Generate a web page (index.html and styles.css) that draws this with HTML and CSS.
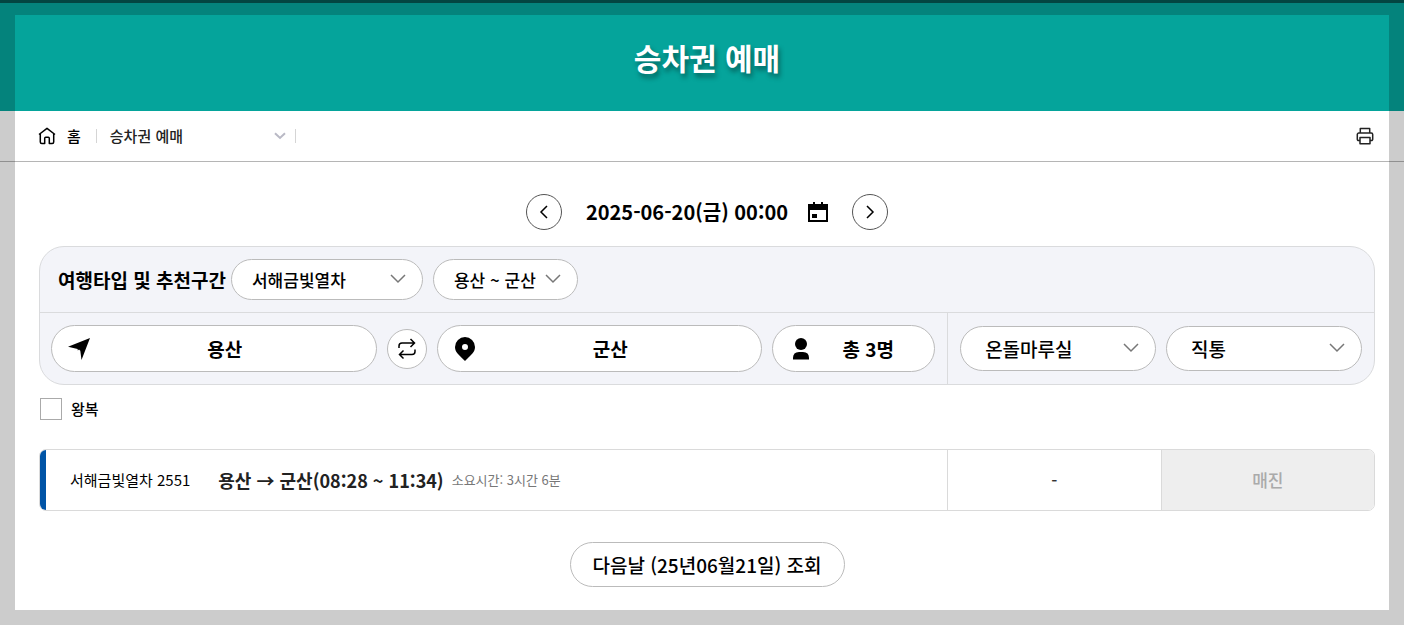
FILE: index.html
```html
<!DOCTYPE html>
<html lang="ko">
<head>
<meta charset="utf-8">
<meta name="viewport" content="width=device-width, initial-scale=1">
<title>승차권 예매</title>
<link rel="stylesheet" href="styles.css">
</head>
<body>
<header class="banner"><h1 class="banner-title">승차권 예매</h1></header>

<nav class="crumbs" aria-label="현재 위치">
  <a class="home" href="#">
    <svg width="18" height="18" viewBox="0 0 18 18" fill="none" stroke="currentColor" stroke-width="1.5" stroke-linejoin="round" aria-hidden="true"><path d="M1 7.500 9 1.300l8 6.200M2.300 6.800v8.200a1.500 1.500 0 0 0 1.500 1.500h2.900v-5.300q0-1 1-1h2.600q1 0 1 1v5.300h2.900a1.500 1.500 0 0 0 1.500-1.500V6.800"/></svg>
    홈
  </a>
  <button class="crumb-menu" type="button">
    승차권 예매
    <svg width="12" height="8" viewBox="0 0 12 8" fill="none" stroke="#b9b9c5" stroke-width="2" aria-hidden="true"><path d="m1 1.300 5 4.700 5-4.700"/></svg>
  </button>
  <button class="print" type="button" aria-label="인쇄">
    <svg width="18" height="18" viewBox="0 0 18 18" fill="none" stroke="#222" stroke-width="1.500" stroke-linejoin="round" aria-hidden="true"><path d="M4.300 6V1.500h9.400V6M4 13.500H2.500a1.200 1.200 0 0 1-1.200-1.200V7.500A1.500 1.500 0 0 1 2.800 6h12.400a1.500 1.500 0 0 1 1.500 1.500v4.800a1.200 1.200 0 0 1-1.200 1.200H14M4 10.500h10v6.200H4z"/></svg>
  </button>
</nav>

<main class="content">
  <div class="date-bar">
    <button class="round" type="button" aria-label="이전 날짜"><svg width="10" height="16" viewBox="0 0 10 16" fill="none" stroke="#000" stroke-width="1.500" aria-hidden="true"><path d="M8 2 2 8l6 6"/></svg></button>
    <button class="date" type="button">2025-06-20(금) 00:00
      <svg width="20" height="20" viewBox="0 0 20 20" aria-hidden="true"><path fill-rule="evenodd" d="M0 2h5V0h2v2h6V0h2v2h5v18H0zm2 6v10h16V8z"/><path d="M4 12h5v4H4z"/></svg>
    </button>
    <button class="round" type="button" aria-label="다음 날짜"><svg width="10" height="16" viewBox="0 0 10 16" fill="none" stroke="#000" stroke-width="1.500" aria-hidden="true"><path d="m2 2 6 6-6 6"/></svg></button>
  </div>

  <form class="search">
    <div class="type-row">
      <label class="type-label" for="train">여행타입 및 추천구간</label>
      <div class="picks">
        <div class="pick pick-train"><select id="train"><option>서해금빛열차</option></select><svg width="16" height="10" viewBox="0 0 16 10" aria-hidden="true"><path d="m1 1 7 7 7-7"/></svg></div>
        <div class="pick pick-section"><select aria-label="추천구간"><option>용산 ~ 군산</option></select><svg width="16" height="10" viewBox="0 0 16 10" aria-hidden="true"><path d="m1 1 7 7 7-7"/></svg></div>
      </div>
    </div>
    <div class="trip-row">
      <div class="trip">
        <button class="pill station" type="button">
          <svg width="22" height="22" viewBox="0 0 22 22" aria-hidden="true"><path d="M22 0 13.500 22 12.300 12.800 11 11.500 9.800 12.500 9.600 11 0 8.800z"/></svg>
          <span>용산</span>
        </button>
        <button class="swap" type="button" aria-label="출발 도착 바꾸기"><svg width="20" height="22" viewBox="0 0 20 22" fill="none" stroke="#000" stroke-width="1.500" aria-hidden="true"><path d="M2 10V8q0-3 3-3h12.500M13.500 1l4 4-4 4M18 11.500v2q0 3-3 3H2.500M6.500 12.500l-4 4 4 4"/></svg></button>
        <button class="pill station" type="button">
          <svg width="22" height="24" viewBox="0 0 22 24" aria-hidden="true"><path fill-rule="evenodd" d="M11 0a10 10 0 0 1 10 10c0 5-3.500 7.500-10 14C4.500 17.500 1 15 1 10A10 10 0 0 1 11 0m0 7a3 3 0 1 0 0 6 3 3 0 0 0 0-6"/></svg>
          <span>군산</span>
        </button>
        <button class="pill people" type="button">
          <svg width="22" height="22" viewBox="0 0 22 22" aria-hidden="true"><circle cx="11" cy="6" r="6"/><path d="M3 21.500V20q0-6 6-6h4q6 0 6 6v1.500z"/></svg>
          <span>총 3명</span>
        </button>
      </div>
      <div class="options">
        <div class="pick"><select aria-label="객실"><option>온돌마루실</option></select><svg width="16" height="10" viewBox="0 0 16 10" aria-hidden="true"><path d="m1 1 7 7 7-7"/></svg></div>
        <div class="pick"><select aria-label="여정"><option>직통</option></select><svg width="16" height="10" viewBox="0 0 16 10" aria-hidden="true"><path d="m1 1 7 7 7-7"/></svg></div>
      </div>
    </div>
  </form>

  <label class="round-trip"><input type="checkbox">왕복</label>

  <article class="result">
    <div class="train-info">
      <span class="train-name">서해금빛열차 2551</span>
      <h2 class="route">용산 → 군산(08:28 ~ 11:34)</h2>
      <span class="duration">소요시간: 3시간 6분</span>
    </div>
    <div class="fare">-</div>
    <button class="sold-out" type="button" disabled>매진</button>
  </article>

  <button class="next-day" type="button">다음날 (25년06월21일) 조회</button>
</main>
<div class="frame" aria-hidden="true"></div>
</body>
</html>
```

FILE: styles.css
```css
* { box-sizing: border-box; }

body {
  margin: 0;
  min-height: 100vh;
  background: #fff;
  color: #000;
  font-family: "Noto Sans CJK KR", "Noto Sans", sans-serif;
  font-size: 15px;
  line-height: 24px;
}

button, select, input { font: inherit; color: inherit; margin: 0; }
button { padding: 0; border: 0; background: none; cursor: pointer; }
svg { display: block; flex: none; }

.frame {
  position: fixed;
  inset: 0;
  border: 15px solid rgba(0, 0, 0, 0.2);
  pointer-events: none;
}

.banner {
  height: 111px;
  padding: 0 29px 0 39px;
  display: flex;
  align-items: center;
  justify-content: center;
  border-top: 3px solid #045752;
  background: #05a49b;
}
.banner-title {
  margin: 0;
  color: #fff;
  font-size: 30px;
  font-weight: 700;
  line-height: 48px;
  text-shadow: 2px 4px 5px rgba(0, 0, 0, 0.4);
}

.crumbs {
  height: 51px;
  padding: 0 30px 0 38px;
  display: flex;
  align-items: center;
  border-bottom: 1px solid #b5b5b5;
  font-weight: 500;
}
.home {
  display: flex;
  align-items: center;
  gap: 11px;
  color: #000;
  text-decoration: none;
}
.crumb-menu {
  width: 200px;
  height: 14px;
  margin-left: 15px;
  padding: 0 9px 0 13px;
  display: flex;
  align-items: center;
  justify-content: space-between;
  border: solid #d5d5d5;
  border-width: 0 1px;
  color: #222;
}
.print { margin-left: auto; }

.content { padding: 32px 29px 38px 39px; }

.date-bar {
  display: flex;
  align-items: center;
  justify-content: center;
  gap: 24px;
}
.round {
  width: 36px;
  height: 36px;
  display: grid;
  place-items: center;
  border: 1px solid #555;
  border-radius: 50%;
}
.date {
  display: flex;
  align-items: center;
  gap: 20px;
  font-size: 20px;
  font-weight: 700;
}

.search {
  margin-top: 16px;
  border: 1px solid #dadbdd;
  border-radius: 25px;
  background: #f3f4f9;
}
.type-row {
  display: flex;
  align-items: center;
  gap: 5px;
  padding: 12px 18px;
  border-bottom: 1px solid #dadbdd;
}
.type-label { font-size: 19px; font-weight: 700; }
.picks { display: flex; gap: 10px; }

.pick { display: grid; align-items: center; }
.pick > * { grid-area: 1 / 1; }
.pick select {
  width: 100%;
  height: 45px;
  padding: 0 40px 0 24px;
  appearance: none;
  border: 1px solid #bbb;
  border-radius: 24px;
  background: #fff;
  font-size: 19px;
  font-weight: 500;
}
.pick svg {
  justify-self: end;
  margin: 0 17px 2px 0;
  fill: none;
  stroke: #777;
  stroke-width: 1.5;
  pointer-events: none;
}
.type-row .pick select {
  height: 41px;
  padding-left: 20px;
  font-size: 17px;
}
.pick-train { width: 192px; }
.pick-section { width: 145px; }

.trip-row { display: flex; }
.trip {
  flex: 1;
  display: flex;
  align-items: center;
  gap: 10px;
  padding: 12px 12px 12px 11px;
}
.options {
  flex: 0 0 32%;
  display: flex;
  align-items: center;
  gap: 10px;
  padding: 0 12px;
  border-left: 1px solid #dadbdd;
}
.options .pick { flex: 1; }

.pill {
  flex: 1;
  height: 47px;
  padding: 0 16px;
  display: flex;
  align-items: center;
  border: 1px solid #bbb;
  border-radius: 24px;
  background: #fff;
  font-size: 19px;
  font-weight: 700;
}
.pill span { flex: 1; text-align: center; }
.people {
  flex: 0 0 163px;
  padding: 0 18px 0 17px;
}
.people span { padding-left: 8px; }
.swap {
  flex: none;
  width: 40px;
  height: 40px;
  display: grid;
  place-items: center;
  border: 1px solid #bbb;
  border-radius: 50%;
  background: #fff;
}

.round-trip {
  width: max-content;
  margin-top: 12px;
  padding-left: 1px;
  display: flex;
  align-items: center;
  gap: 9px;
  font-weight: 500;
}
.round-trip input {
  width: 22px;
  height: 22px;
  appearance: none;
  border: 1px solid #aaa;
  background: #fff;
}
.round-trip input:checked { background: #0054a6; }

.result {
  height: 62px;
  margin-top: 28px;
  display: flex;
  overflow: hidden;
  border: 1px solid #dadada;
  border-radius: 7px;
}
.train-info {
  flex: 1;
  display: flex;
  align-items: center;
  padding-left: 24px;
  border-left: 6px solid #0054a6;
}
.route {
  margin: 0 8px 0 28px;
  color: #222;
  font-size: 18px;
  font-weight: 700;
}
.duration { color: #777; font-size: 13px; }
.fare, .sold-out {
  flex: 0 0 16%;
  display: grid;
  place-items: center;
  border-left: 1px solid #dadada;
}
.fare { color: #333; font-size: 17px; font-weight: 500; }
.sold-out { background: #eee; color: #aaa; font-size: 17px; font-weight: 500; cursor: default; }

.next-day {
  height: 45px;
  margin: 31px auto 0;
  padding: 0 22px;
  display: block;
  border: 1px solid #bbb;
  border-radius: 24px;
  font-size: 19px;
  font-weight: 500;
}
```
